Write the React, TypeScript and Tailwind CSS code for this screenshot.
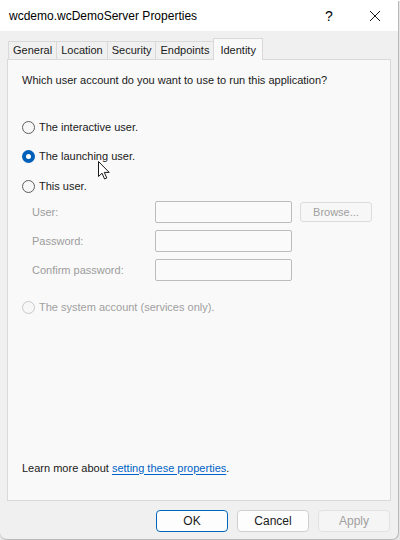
import React from 'react'

const font = { fontFamily: '"Liberation Sans", Arial, sans-serif' }

function Radio({ label, checked, disabled }: { label: string; checked?: boolean; disabled?: boolean }) {
  return (
    <div className="flex items-center gap-[4px] h-[16px]">
      {checked ? (
        <span className="w-[13px] h-[13px] rounded-full bg-[#005fb8] flex items-center justify-center">
          <span className="w-[5px] h-[5px] rounded-full bg-white" />
        </span>
      ) : (
        <span
          className={
            'w-[13px] h-[13px] rounded-full border ' +
            (disabled ? 'border-[#c8c8c8] bg-[#f7f7f7]' : 'border-[#5d5d5d] bg-[#f7f7f7]')
          }
        />
      )}
      <span className={disabled ? 'text-[#a0a0a0]' : 'text-[#1a1a1a]'}>{label}</span>
    </div>
  )
}

function Field({ label }: { label: string }) {
  return (
    <div className="flex items-center h-[22px]">
      <span className="w-[133px] pl-[10px] text-[#9c9c9c]">{label}</span>
      <div className="w-[137px] h-[22px] border border-[#bcbcbc] rounded-[2px] bg-[#fafafa]" />
    </div>
  )
}

export default function App() {
  const tabs = ['General', 'Location', 'Security', 'Endpoints']
  return (
    <div className="w-[400px] h-[540px] bg-[#e6e6e6] text-[11px] relative" style={font}>
      <div className="w-[399px] h-[539px] mt-px bg-[#f0f0f0] border-r border-b border-[#b9b9b9] rounded-b-[7px] flex flex-col overflow-hidden">
        <div className="h-[30px] bg-white flex items-center pl-[9px] shrink-0">
          <span className="text-[12px] text-black flex-1">wcdemo.wcDemoServer Properties</span>
          <span className="w-[46px] text-center text-[14px] text-black ml-[3px]">?</span>
          <span className="w-[46px] flex justify-center">
            <svg width="12" height="12" viewBox="0 0 12 12">
              <path d="M1 1L11 11M11 1L1 11" stroke="#1a1a1a" strokeWidth="1" />
            </svg>
          </span>
        </div>

        <div className="flex items-end h-[28px] pl-[8px] pt-[7px] shrink-0">
          {tabs.map(t => (
            <div
              key={t}
              className="h-[18px] px-[4px] border border-b-0 border-[#d9d9d9] -mr-px bg-[#f0f0f0] text-[#1a1a1a] flex items-center"
            >
              {t}
            </div>
          ))}
          <div className="h-[22px] px-[6px] border border-b-0 border-[#d9d9d9] bg-[#f9f9f9] text-[#1a1a1a] flex items-start pt-[3px] relative z-10 -mb-px">
            Identity
          </div>
        </div>

        <div className="mx-[7px] h-[442px] border border-[#d9d9d9] bg-[#f9f9f9] flex flex-col pl-[14px] pt-[12px] shrink-0">
          <p className="text-[#1a1a1a] h-[16px] flex items-center">Which user account do you want to use to run this application?</p>
          <div className="mt-[31px] flex flex-col gap-[13.5px]">
            <Radio label="The interactive user." />
            <Radio label="The launching user." checked />
            <Radio label="This user." />
          </div>
          <div className="mt-[7px] flex flex-col gap-[7px]">
            <div className="flex items-center gap-[8px]">
              <Field label="User:" />
              <div className="w-[72px] h-[20px] border border-[#dcdcdc] rounded-[3px] bg-[#f7f7f7] text-[#a0a0a0] flex items-center justify-center">
                Browse...
              </div>
            </div>
            <Field label="Password:" />
            <Field label="Confirm password:" />
          </div>
          <div className="mt-[18px]">
            <Radio label="The system account (services only)." disabled />
          </div>
          <p className="mt-auto mb-[24px] text-[#1a1a1a]">
            Learn more about{' '}
            <span className="text-[#0063c5] underline underline-offset-2">setting these properties</span>.
          </p>
        </div>

        <div className="flex justify-end gap-[9px] pr-[8px] mt-[9px]">
          <div className="w-[72px] h-[22px] rounded-[4px] border border-[#0067c0] bg-[#fdfdfd] flex items-center justify-center text-[#1a1a1a] text-[12px]">
            OK
          </div>
          <div className="w-[72px] h-[22px] rounded-[4px] border border-[#cfcfcf] bg-[#fdfdfd] flex items-center justify-center text-[#1a1a1a] text-[12px]">
            Cancel
          </div>
          <div className="w-[72px] h-[22px] rounded-[4px] border border-[#e2e2e2] bg-[#f5f5f5] flex items-center justify-center text-[#a0a0a0] text-[12px]">
            Apply
          </div>
        </div>
      </div>

      <svg className="absolute left-[98px] top-[160px]" width="12" height="19" viewBox="0 0 12 19">
        <path d="M0.5 0.5V15.5L4 12.2L6.6 18L8.8 17L6.3 11.4H11.2Z" fill="white" stroke="#1a1a1a" strokeWidth="1" strokeLinejoin="round" />
      </svg>
    </div>
  )
}
